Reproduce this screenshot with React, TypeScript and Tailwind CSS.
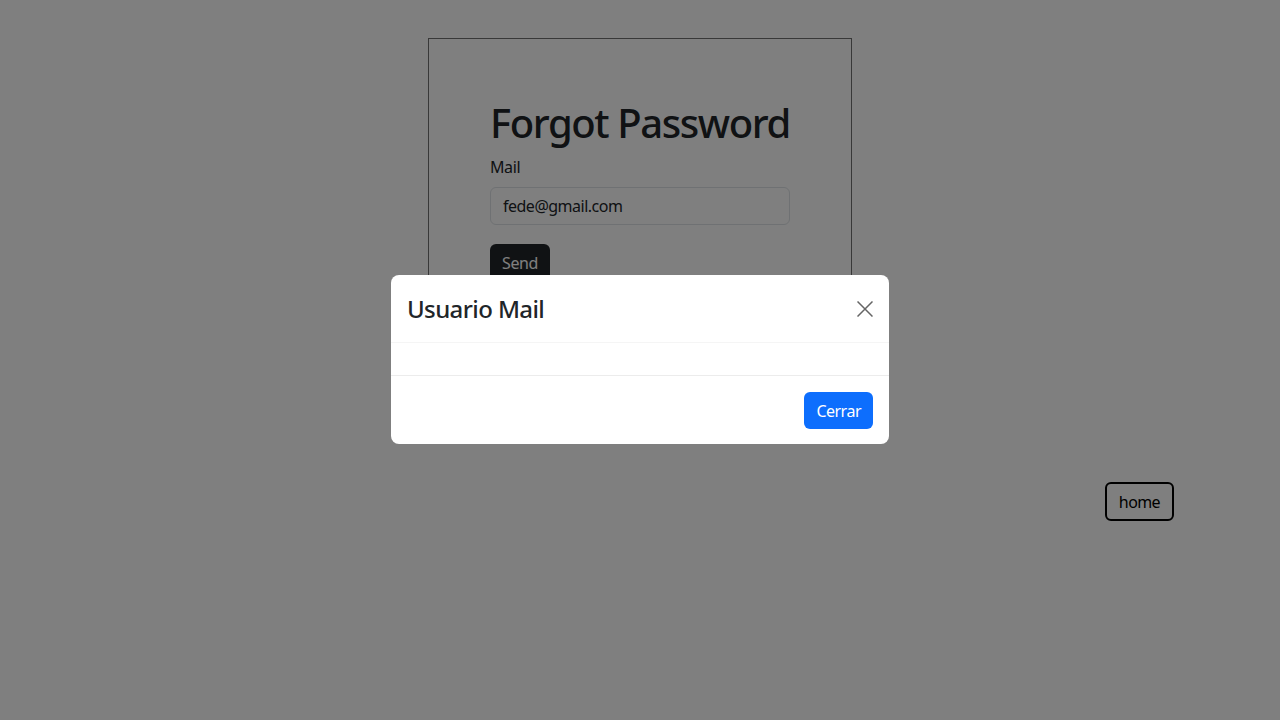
import React from 'react';

const font = { fontFamily: '"Noto Sans", "Open Sans", sans-serif' };

export default function App() {
  return (
    <div className="relative min-h-[720px] bg-white text-[#212529]" style={font}>
      {/* page */}
      <div className="flex flex-col items-center pt-[38px]">
        <div className="w-[424px] border border-[#707070] px-[61px] pt-[60px] pb-[40px]">
          <h1 className="whitespace-nowrap text-[40px] leading-[1.2] font-medium tracking-[-1.4px] mb-[8px]">
            Forgot Password
          </h1>
          <label className="block text-[16px] leading-[1.5] tracking-[-0.4px] mb-[8px]">Mail</label>
          <input
            readOnly
            value="fede@gmail.com"
            className="block w-[300px] h-[38px] rounded-[6px] border border-[#dee2e6] px-[12px] text-[16px] tracking-[-0.5px] text-[#212529] outline-none"
          />
          <button className="mt-[19px] h-[38px] rounded-[6px] bg-[#212529] px-[12px] text-[16px] tracking-[-0.4px] text-white">
            Send
          </button>
        </div>
      </div>
      <div className="flex justify-end pr-[106px] pt-[159px]">
        <button className="h-[39px] rounded-[6px] border-2 border-black px-[12px] text-[16px] tracking-[-0.6px] text-black">
          home
        </button>
      </div>

      {/* backdrop */}
      <div className="fixed inset-0 bg-black/50" />

      {/* modal */}
      <div className="fixed inset-0 flex items-center justify-center">
        <div className="-mt-[1px] w-[498px] rounded-[8px] bg-white">
          <div className="flex h-[68px] items-center justify-between border-b border-[#f5f5f5] px-[16px]">
            <h4 className="mt-[2px] text-[24px] leading-[1.2] font-medium tracking-[-0.6px]">Usuario Mail</h4>
            <button className="flex h-[16px] w-[16px] items-center justify-center opacity-60">
              <svg width="16" height="16" viewBox="0 0 16 16" fill="none" stroke="#000" strokeWidth="1.5">
                <path d="M0.5 0.5l15 15M15.5 0.5l-15 15" />
              </svg>
            </button>
          </div>
          <div className="h-[32px]" />
          <div className="flex justify-end border-t border-[#ececec] px-[12px] pt-[12px] pb-[11px]">
            <button className="m-[4px] h-[37px] rounded-[6px] bg-[#0d6efd] px-[12px] text-[16px] tracking-[-0.5px] text-white">
              Cerrar
            </button>
          </div>
        </div>
      </div>
    </div>
  );
}
